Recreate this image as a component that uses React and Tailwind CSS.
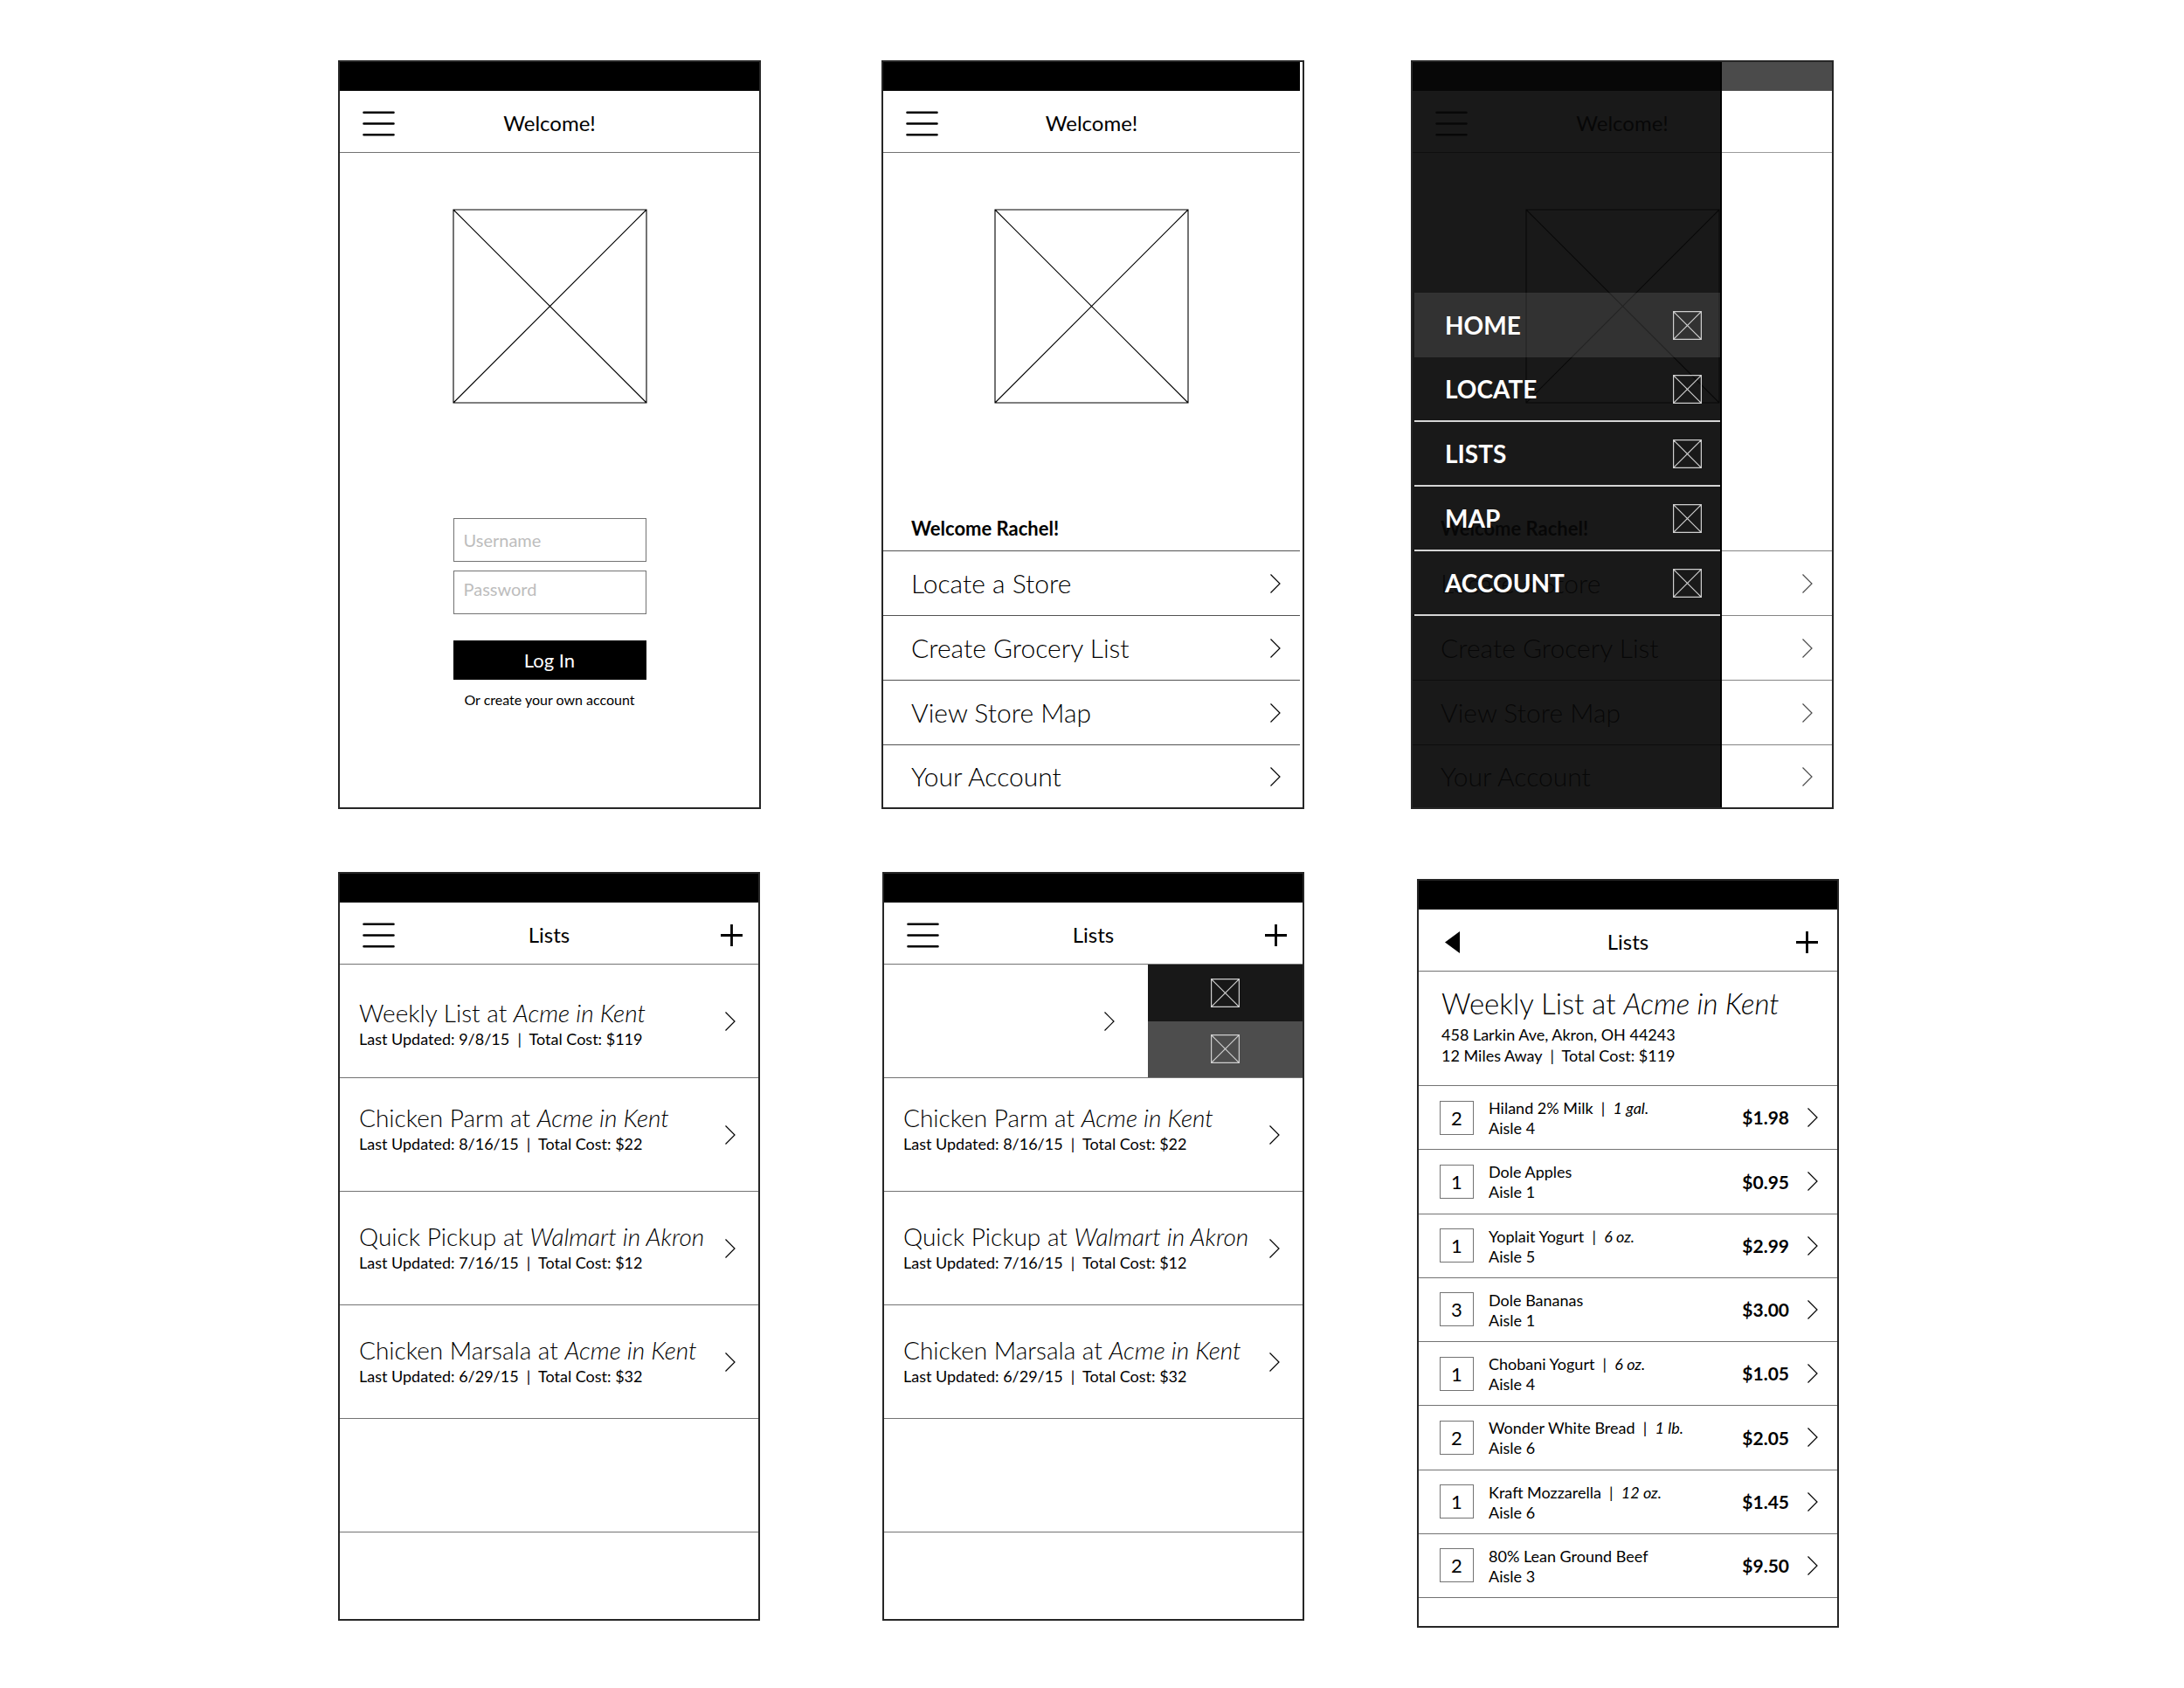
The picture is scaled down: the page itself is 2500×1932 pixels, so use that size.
// src/App.jsx
import clsx from "clsx";

const MENU_ITEMS = ["Locate a Store", "Create Grocery List", "View Store Map", "Your Account"];

const DRAWER_ITEMS = ["HOME", "LOCATE", "LISTS", "MAP", "ACCOUNT"];

const LISTS = [
  { name: "Weekly List", store: "Acme in Kent", updated: "9/8/15", total: "$119", align: "pt-2" },
  { name: "Chicken Parm", store: "Acme in Kent", updated: "8/16/15", total: "$22", align: "pb-3" },
  { name: "Quick Pickup", store: "Walmart in Akron", updated: "7/16/15", total: "$12" },
  { name: "Chicken Marsala", store: "Acme in Kent", updated: "6/29/15", total: "$32" },
];

const PRODUCTS = [
  { qty: 2, name: "Hiland 2% Milk", size: "1 gal.", aisle: 4, price: "$1.98" },
  { qty: 1, name: "Dole Apples", aisle: 1, price: "$0.95" },
  { qty: 1, name: "Yoplait Yogurt", size: "6 oz.", aisle: 5, price: "$2.99" },
  { qty: 3, name: "Dole Bananas", aisle: 1, price: "$3.00" },
  { qty: 1, name: "Chobani Yogurt", size: "6 oz.", aisle: 4, price: "$1.05" },
  { qty: 2, name: "Wonder White Bread", size: "1 lb.", aisle: 6, price: "$2.05" },
  { qty: 1, name: "Kraft Mozzarella", size: "12 oz.", aisle: 6, price: "$1.45" },
  { qty: 2, name: "80% Lean Ground Beef", aisle: 3, price: "$9.50" },
];

/* ICONS */
const MenuIcon = () => (
  <svg width="37" height="29" viewBox="0 0 37 29" stroke="currentColor" strokeWidth="2.6" strokeLinecap="round">
    <path d="M1.5 1.7h34M1.5 14.5h34M1.5 27.3h34" />
  </svg>
);

const PlusIcon = () => (
  <svg width="25" height="25" viewBox="0 0 25 25" stroke="currentColor" strokeWidth="2.8">
    <path d="M12.5 0v25M0 12.5h25" />
  </svg>
);

const BackIcon = () => (
  <svg width="17" height="25" viewBox="0 0 17 25" fill="currentColor">
    <path d="M17 0v25L0 12.5z" />
  </svg>
);

const Chevron = () => (
  <svg width="12" height="22" viewBox="0 0 12 22" fill="none" stroke="currentColor" strokeWidth="1.2" className="shrink-0">
    <path d="M0.5 0.5L11 11L0.5 21.5" />
  </svg>
);

// Crossed box that stands in for an image or icon
const Placeholder = ({ className }) => (
  <svg viewBox="0 0 100 100" fill="none" stroke="currentColor" strokeWidth="1.1" className={className}>
    <path d="M0 0h100v100H0zM0 0l100 100M100 0L0 100" vectorEffect="non-scaling-stroke" />
  </svg>
);

const SmallPlaceholder = () => (
  <svg width="33" height="33" viewBox="0 0 33 33" fill="none" stroke="#cfcfcf" strokeWidth="1.2">
    <path d="M0.6 0.6h31.8v31.8H0.6zM0.6 0.6l31.8 31.8M32.4 0.6L0.6 32.4" />
  </svg>
);

/* SHARED PARTS */
const Screen = ({ className, children }) => (
  <section className={clsx("relative flex min-h-[857px] flex-1 flex-col border-2 border-neutral-800 bg-white", className)}>
    {children}
  </section>
);

const StatusBar = () => <div className="h-[33px] shrink-0 bg-black" />;

const Header = ({ title, back, add, padding = "px-[18px]" }) => (
  <header className={clsx("grid h-[71px] shrink-0 grid-cols-[1fr_auto_1fr] items-center border-b border-neutral-500 pt-1", padding)}>
    <button type="button" aria-label={back ? "Back" : "Menu"} className="justify-self-start pl-2">
      {back ? <BackIcon /> : <MenuIcon />}
    </button>
    <h1 className="text-[24px] leading-8">{title}</h1>
    {add && (
      <button type="button" aria-label="Add" className="justify-self-end">
        <PlusIcon />
      </button>
    )}
  </header>
);

const HomeContent = () => (
  <>
    <StatusBar />
    <Header title="Welcome!" />
    <Placeholder className="mx-auto mt-[65px] size-[221px] overflow-visible" />
    <p className="mt-[130px] mb-[11px] pl-8 text-[22px] leading-7 font-bold">Welcome Rachel!</p>
    <nav>
      {MENU_ITEMS.map((item) => (
        <a
          key={item}
          href="#"
          className="flex h-[74px] items-center justify-between border-t border-neutral-600 pr-[22px] pl-8 text-[30px] font-light last:h-[72px]"
        >
          {item}
          <Chevron />
        </a>
      ))}
    </nav>
  </>
);

const ListRow = ({ list }) => (
  <li className="h-[130px] border-b border-neutral-500">
    <a href="#" className="flex h-full items-center justify-between pr-[26px] pl-[22px]">
      <div className={clsx("whitespace-nowrap", list.align)}>
        <p className="text-[28px] leading-8 font-light">
          {list.name} at <em>{list.store}</em>
        </p>
        <p className="text-[18px] leading-7 whitespace-pre">
          Last Updated: {list.updated}{"  |  "}Total Cost: {list.total}
        </p>
      </div>
      <Chevron />
    </a>
  </li>
);

/* SCREENS */
const LoginScreen = () => (
  <Screen>
    <StatusBar />
    <Header title="Welcome!" />
    <Placeholder className="mx-auto mt-[65px] size-[221px] overflow-visible" />
    <form className="mx-auto mt-[132px] flex w-[221px] flex-col">
      <input
        type="text"
        aria-label="Username"
        placeholder="Username"
        className="h-[50px] border border-neutral-500 px-[11px] text-[20px] placeholder:text-[#bdbdbd]"
      />
      <input
        type="password"
        aria-label="Password"
        placeholder="Password"
        className="mt-[10px] h-[50px] border border-neutral-500 px-[11px] pb-2 text-[20px] placeholder:text-[#bdbdbd]"
      />
      <button type="button" className="mt-[30px] h-[45px] bg-black text-[22px] text-white">
        Log In
      </button>
      <a href="#" className="mt-[11px] text-center text-[16px] leading-6 whitespace-nowrap">
        Or create your own account
      </a>
    </form>
  </Screen>
);

const HomeScreen = () => (
  <Screen className="min-[2200px]:ml-[138px]">
    <div className="mr-[3px]">
      <HomeContent />
    </div>
  </Screen>
);

const DrawerScreen = () => (
  <Screen className="min-[2200px]:ml-[122px]">
    <div className="opacity-70">
      <HomeContent />
    </div>
    {/* Drawer lies over the dimmed home screen */}
    <aside className="absolute inset-y-0 left-0 w-[354px] border-r-2 border-black bg-black/90 pt-[264px] pl-0.5 text-white">
      <nav>
        {DRAWER_ITEMS.map((item, i) => (
          <a
            key={item}
            href="#"
            className={clsx(
              "flex h-[74px] items-center justify-between pr-[21px] pl-[35px] text-[28px] font-bold",
              i === 0 ? "bg-white/11" : "border-b-2 border-neutral-300"
            )}
          >
            {item}
            <SmallPlaceholder />
          </a>
        ))}
      </nav>
    </aside>
  </Screen>
);

const ListsScreen = () => (
  <Screen>
    <StatusBar />
    <Header title="Lists" add />
    <ul>
      {LISTS.map((list) => (
        <ListRow key={list.name} list={list} />
      ))}
      <li className="h-[130px] border-b border-neutral-500" />
    </ul>
  </Screen>
);

const SwipedListsScreen = () => (
  <Screen className="min-[2200px]:ml-[140px]">
    <StatusBar />
    <Header title="Lists" add />
    <ul>
      {/* First row is swiped left to show its actions */}
      <li className="flex h-[130px] border-b border-neutral-500">
        <a href="#" aria-label="Weekly List" className="flex flex-1 items-center justify-end pr-[38px]">
          <Chevron />
        </a>
        <div className="flex w-[177px] flex-col">
          <button type="button" aria-label="Edit" className="flex flex-1 items-center justify-center bg-[#181818]">
            <SmallPlaceholder />
          </button>
          <button type="button" aria-label="Delete" className="flex flex-1 items-center justify-center bg-[#4d4d4d]">
            <SmallPlaceholder />
          </button>
        </div>
      </li>
      {LISTS.slice(1).map((list) => (
        <ListRow key={list.name} list={list} />
      ))}
      <li className="h-[130px] border-b border-neutral-500" />
    </ul>
  </Screen>
);

const ListDetailScreen = () => (
  <Screen className="min-[2200px]:mt-2 min-[2200px]:-mb-2 min-[2200px]:ml-[129px]">
    <StatusBar />
    <Header title="Lists" back add padding="px-[22px]" />
    <div className="h-[131px] border-b border-neutral-500 pt-4 pl-[26px] whitespace-nowrap">
      <h2 className="mb-1 text-[33px] leading-10 font-light">
        Weekly List at <em>Acme in Kent</em>
      </h2>
      <p className="text-[18px] leading-6">458 Larkin Ave, Akron, OH 44243</p>
      <p className="text-[18px] leading-6 whitespace-pre">12 Miles Away{"  |  "}Total Cost: $119</p>
    </div>
    <ul className="grid h-[586px] auto-rows-fr">
      {PRODUCTS.map((product) => (
        <li key={product.name} className="flex items-center border-b border-neutral-500 pr-[22px] pl-[24px]">
          <input
            type="text"
            aria-label={`${product.name} quantity`}
            defaultValue={product.qty}
            className="size-[39px] border border-neutral-500 text-center text-[22px]"
          />
          <div className="ml-[17px] pt-0.5 text-[18px] leading-[23px]">
            <p className="whitespace-pre">
              {product.name}
              {product.size && (
                <>
                  {"  |  "}
                  <em>{product.size}</em>
                </>
              )}
            </p>
            <p>Aisle {product.aisle}</p>
          </div>
          <span className="ml-auto pr-[21px] text-[21px] font-bold">{product.price}</span>
          <a href="#" aria-label={product.name}>
            <Chevron />
          </a>
        </li>
      ))}
    </ul>
  </Screen>
);

const App = () => {
  return (
    <main className="flex flex-col gap-[71px] bg-white px-6 py-[69px] font-['Lato','Open_Sans',sans-serif] text-black min-[2200px]:px-0">
      <div className="flex flex-col gap-16 min-[2200px]:flex-row min-[2200px]:gap-0 min-[2200px]:pr-[401px] min-[2200px]:pl-[387px]">
        <LoginScreen />
        <HomeScreen />
        <DrawerScreen />
      </div>
      <div className="flex flex-col gap-16 min-[2200px]:flex-row min-[2200px]:gap-0 min-[2200px]:pt-px min-[2200px]:pr-[395px] min-[2200px]:pl-[387px]">
        <ListsScreen />
        <SwipedListsScreen />
        <ListDetailScreen />
      </div>
    </main>
  );
};

export default App;
